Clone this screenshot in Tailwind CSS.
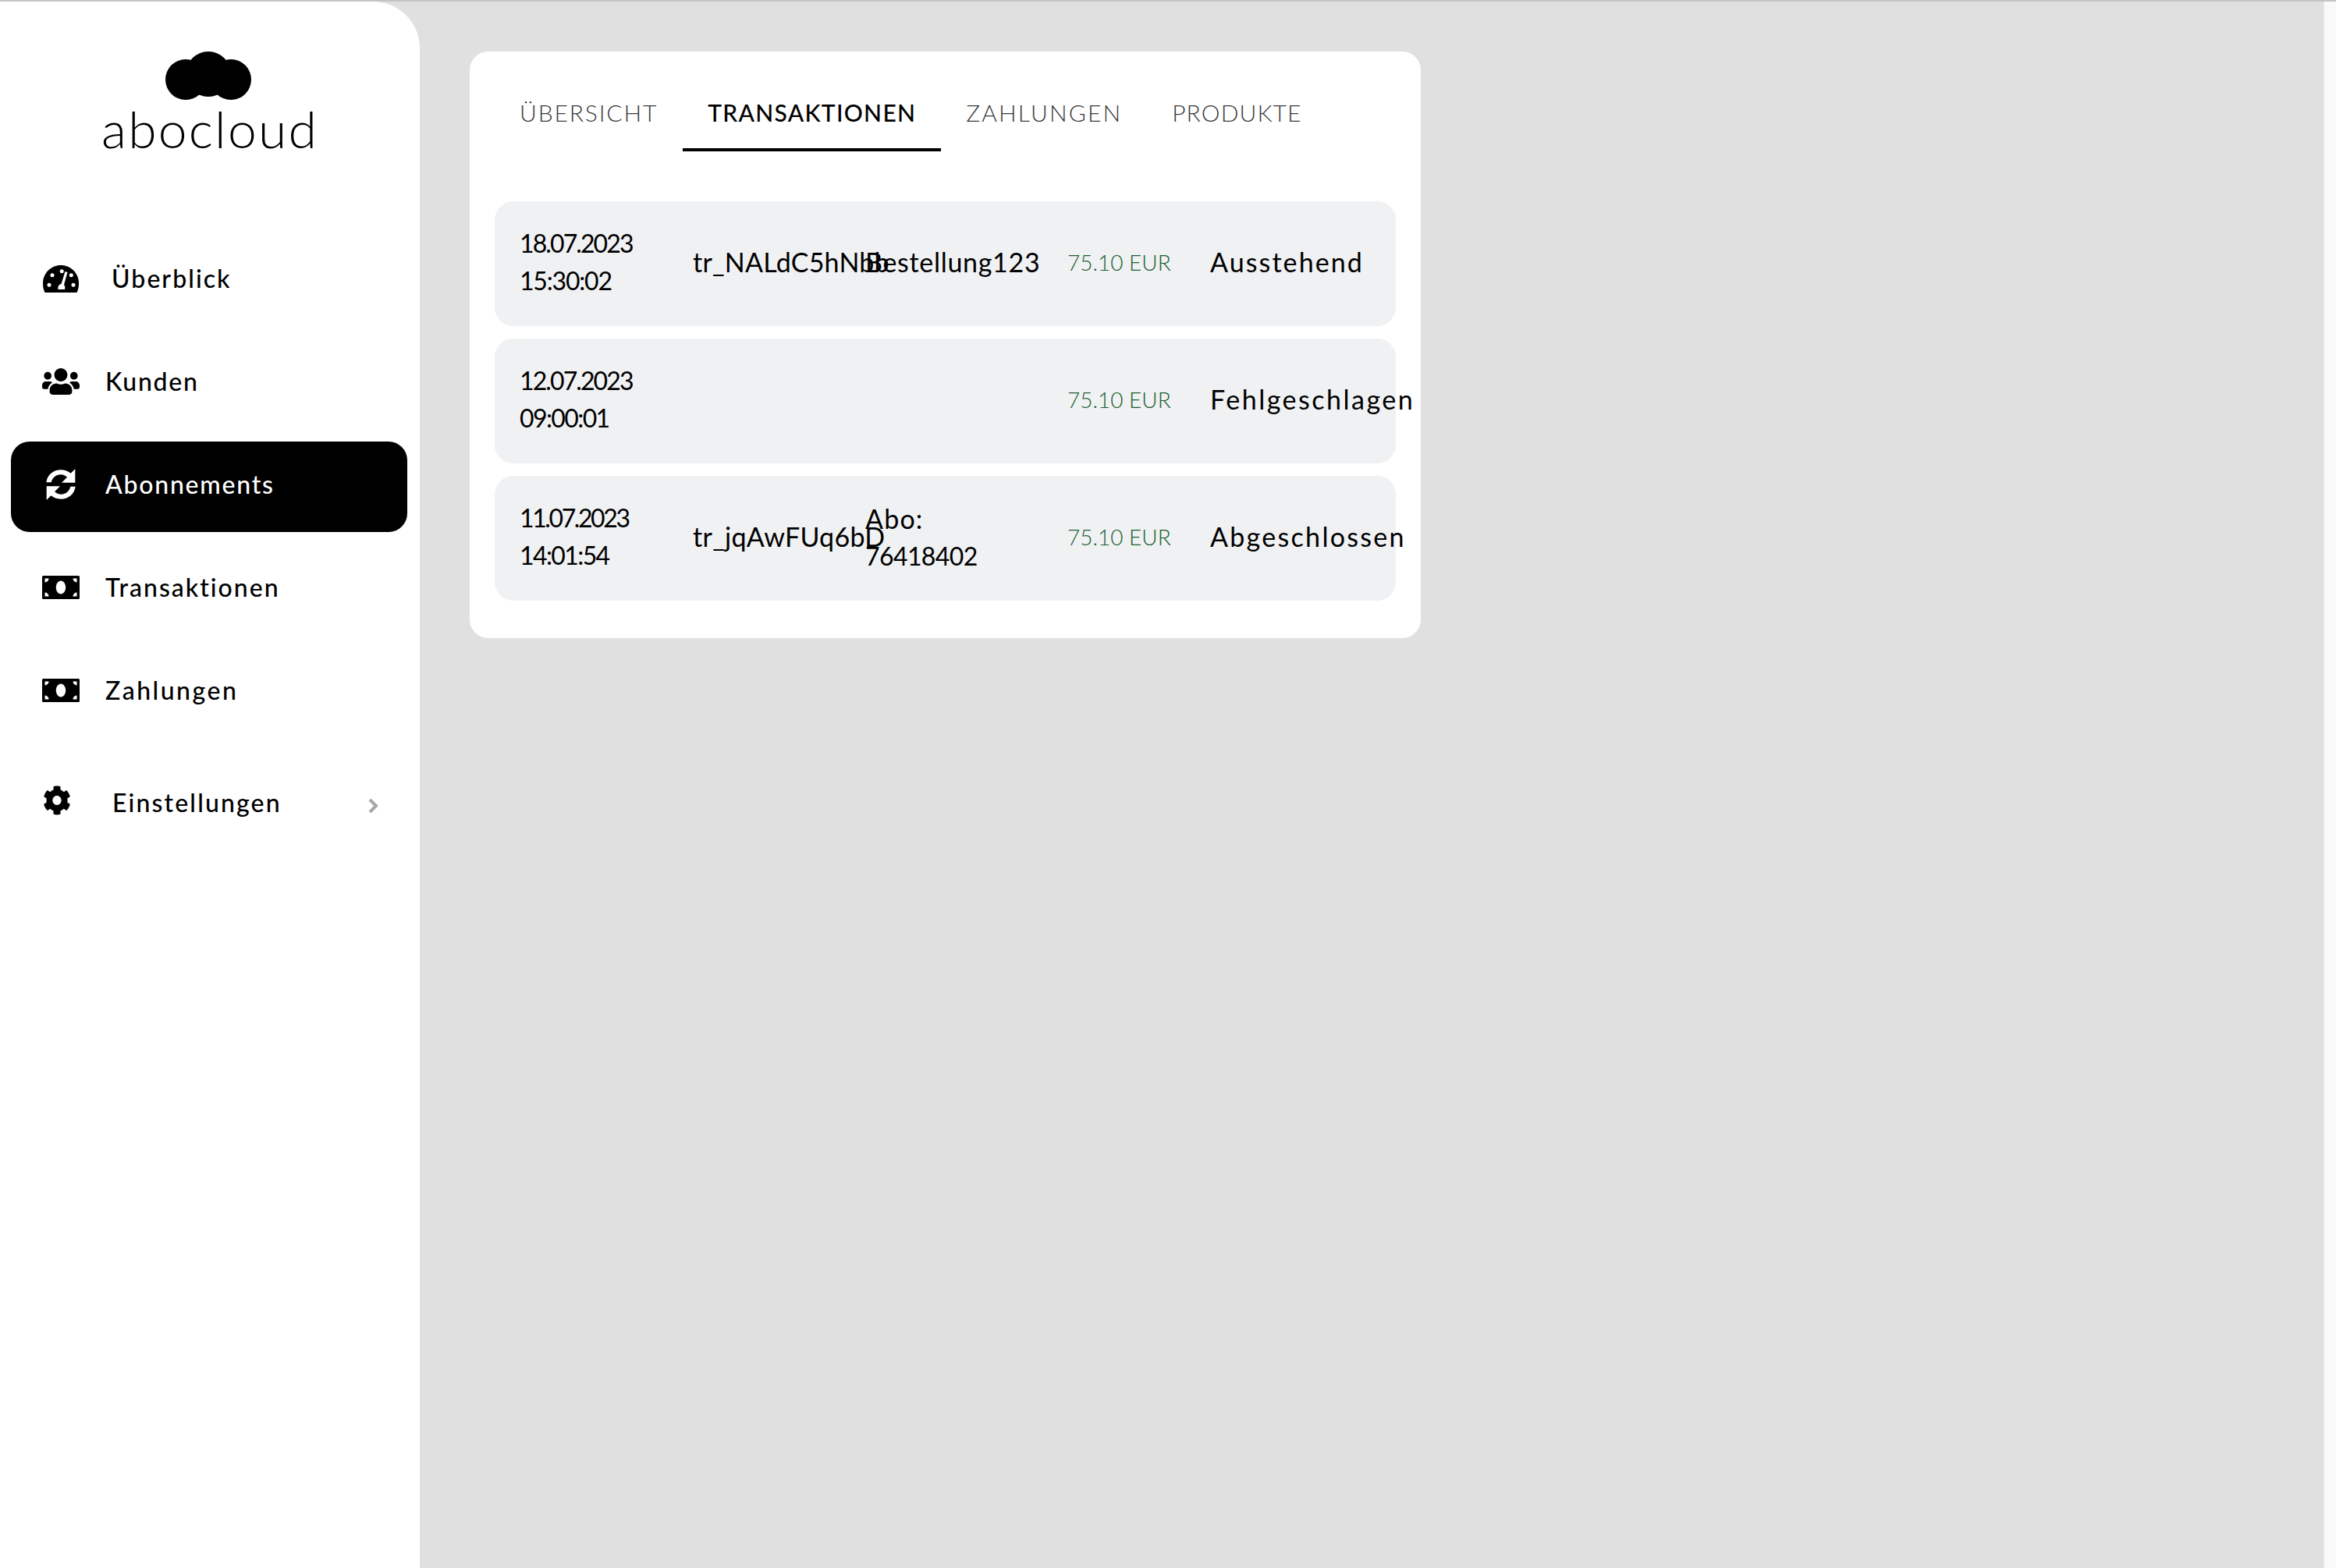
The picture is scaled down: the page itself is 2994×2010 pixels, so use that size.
<!DOCTYPE html>
<html lang="de">
<head>
<meta charset="utf-8">
<title>abocloud</title>
<script src="https://cdn.jsdelivr.net/npm/@tailwindcss/browser@4"></script>
</head>
<body class="m-0 bg-[#e0e0e0] font-['Lato',sans-serif] text-black">
<div class="flex h-[2010px] w-[2994px] flex-col overflow-hidden">
  <div class="h-[2px] w-full shrink-0 bg-[#c4c4c4]"></div>
  <div class="flex min-h-0 flex-1">
    <aside class="relative w-[538px] shrink-0 rounded-tr-[60px] bg-white">
      <div class="flex h-[300px] flex-col items-center pt-[64px]">
        <svg class="mr-[5px] h-[62px] w-[112px]" viewBox="0 0 112 62" fill="#000"><circle cx="27" cy="36" r="26"/><circle cx="56" cy="29" r="29"/><circle cx="85" cy="36" r="26"/></svg>
        <div class="mt-[2px] text-[66px] leading-[70px] font-light tracking-[2.2px]">abocloud</div>
      </div>
      <nav class="flex flex-col gap-[16px] pr-[16px] pl-[14px] text-[32px] font-medium">
        <a class="flex h-[116px] items-center pb-[6px]">
          <span class="flex w-[129px] pl-[41px]"><svg class="h-[35px] w-[46px]" viewBox="0 0 46 35"><path fill="#000" d="M2.500 35C.8 31.500 0 27.500 0 23 0 10.300 10.300 0 23 0s23 10.300 23 23c0 4.500-.8 8.500-2.500 12z"/><g fill="#fff"><circle cx="12" cy="12.700" r="2.500"/><circle cx="24.200" cy="7.700" r="2.500"/><circle cx="8" cy="25.300" r="2.500"/><circle cx="39" cy="25.300" r="2.500"/><circle cx="36.300" cy="12.700" r="2.500"/><path d="M28.500 8l3 1-4.500 16c1.500 1.500 1.500 4 1 6h-8.500c-.5-4 1-6.500 4-7z"/></g></svg></span>
          <span class="tracking-[2.05px]">Überblick</span>
        </a>
        <a class="flex h-[116px] items-center pb-[6px]">
          <span class="flex w-[121px] pl-[40px]"><svg class="h-[34px] w-[48px]" viewBox="0 32 640 448" preserveAspectRatio="none" fill="#000"><path d="M96 224c35.300 0 64-28.700 64-64s-28.700-64-64-64-64 28.700-64 64 28.700 64 64 64zm448 0c35.300 0 64-28.700 64-64s-28.700-64-64-64-64 28.700-64 64 28.700 64 64 64zm32 32h-64c-17.600 0-33.500 7.100-45.100 18.600 40.300 22.100 68.900 62 75.100 109.400h66c17.700 0 32-14.300 32-32v-32c0-35.300-28.700-64-64-64zm-256 0c61.900 0 112-50.100 112-112S381.900 32 320 32 208 82.100 208 144s50.100 112 112 112zm76.800 32h-8.300c-20.800 10-43.900 16-68.500 16s-47.600-6-68.500-16h-8.300C179.600 288 128 339.600 128 403.200V432c0 26.500 21.500 48 48 48h288c26.500 0 48-21.500 48-48v-28.800c0-63.600-51.600-115.200-115.200-115.200zm-223.700-13.400C161.500 263.100 145.600 256 128 256H64c-35.300 0-64 28.700-64 64v32c0 17.700 14.300 32 32 32h65.900c6.300-47.400 34.900-87.300 75.200-109.400z"/></svg></span>
          <span class="tracking-[1.75px]">Kunden</span>
        </a>
        <a class="flex h-[116px] items-center rounded-[24px] bg-black pb-[6px] text-white">
          <span class="flex w-[121px] pl-[44px]"><svg class="h-[40px] w-[40px]" viewBox="0 0 120 120" fill="#fff"><path d="M4 52C8 22 32 4 60 4c15 0 28 5 38 13L115 0v53H63l21-21c-7-6-15-10-24-10-18 0-33 12-37 30z"/><path d="M116 68c-4 30-28 48-56 48-15 0-28-5-38-13L5 120V67h52L36 88c7 6 15 10 24 10 18 0 33-12 37-30z"/></svg></span>
          <span class="tracking-[1.77px]">Abonnements</span>
        </a>
        <a class="flex h-[116px] items-center pb-[6px]">
          <span class="flex w-[121px] pl-[40px]"><svg class="h-[30px] w-[48px]" viewBox="0 0 48 30" fill="#000"><path fill-rule="evenodd" d="M1.500 0h45A1.500 1.500 0 0 1 48 1.500v27a1.500 1.500 0 0 1-1.500 1.500h-45A1.500 1.500 0 0 1 0 28.500v-27A1.500 1.500 0 0 1 1.500 0zM24 6.500c-3.400 0-6.200 3.800-6.200 8.500s2.800 8.500 6.200 8.500 6.200-3.800 6.200-8.500-2.800-8.500-6.200-8.500zM3.500 3.500v5a5 5 0 0 0 5-5zm36 0a5 5 0 0 0 5 5v-5zm-36 18v5h5a5 5 0 0 0-5-5zm41 0a5 5 0 0 0-5 5h5z"/></svg></span>
          <span class="tracking-[2px]">Transaktionen</span>
        </a>
        <a class="flex h-[116px] items-center pb-[6px]">
          <span class="flex w-[121px] pl-[40px]"><svg class="h-[30px] w-[48px]" viewBox="0 0 48 30" fill="#000"><path fill-rule="evenodd" d="M1.500 0h45A1.500 1.500 0 0 1 48 1.500v27a1.500 1.500 0 0 1-1.500 1.500h-45A1.500 1.500 0 0 1 0 28.500v-27A1.500 1.500 0 0 1 1.500 0zM24 6.500c-3.400 0-6.200 3.800-6.200 8.500s2.800 8.500 6.200 8.500 6.200-3.800 6.200-8.500-2.800-8.500-6.200-8.500zM3.500 3.500v5a5 5 0 0 0 5-5zm36 0a5 5 0 0 0 5 5v-5zm-36 18v5h5a5 5 0 0 0-5-5zm41 0a5 5 0 0 0-5 5h5z"/></svg></span>
          <span class="tracking-[2.5px]">Zahlungen</span>
        </a>
        <a class="mt-[12px] flex h-[116px] items-center pb-[6px]">
          <span class="flex w-[130px] pl-[41px]"><svg class="mb-[6px] h-[38px] w-[36px]" viewBox="0 0 512 512" fill="#000" preserveAspectRatio="none"><path d="M487.400 315.700l-42.600-24.600c4.300-23.200 4.300-47 0-70.200l42.600-24.600c4.900-2.800 7.100-8.600 5.500-14-11.100-35.600-30-67.800-54.700-94.600-3.800-4.100-10-5.100-14.800-2.300L380.800 110c-17.900-15.400-38.500-27.300-60.800-35.100V25.800c0-5.600-3.900-10.500-9.400-11.700-36.700-8.200-74.300-7.800-109.200 0-5.500 1.200-9.400 6.100-9.400 11.700V75c-22.200 7.900-42.800 19.800-60.800 35.100L88.700 85.500c-4.900-2.800-11-1.900-14.800 2.300-24.700 26.700-43.600 58.900-54.700 94.600-1.700 5.400.6 11.200 5.500 14L67.300 221c-4.300 23.200-4.300 47 0 70.200l-42.600 24.600c-4.900 2.800-7.100 8.600-5.500 14 11.100 35.600 30 67.800 54.700 94.600 3.800 4.100 10 5.100 14.800 2.300l42.600-24.600c17.900 15.400 38.500 27.300 60.800 35.100v49.200c0 5.600 3.900 10.500 9.400 11.700 36.700 8.200 74.300 7.800 109.200 0 5.500-1.200 9.400-6.100 9.400-11.700v-49.200c22.200-7.900 42.800-19.800 60.800-35.100l42.600 24.600c4.900 2.800 11 1.900 14.800-2.300 24.700-26.700 43.600-58.900 54.700-94.600 1.500-5.500-.7-11.300-5.600-14.100zM256 336c-44.100 0-80-35.900-80-80s35.900-80 80-80 80 35.900 80 80-35.900 80-80 80z"/></svg></span>
          <span class="tracking-[2.15px]">Einstellungen</span>
          <svg class="absolute left-[471px] mt-[8px] h-[20px] w-[14px]" viewBox="0 0 14 20" fill="none" stroke="#a8a8a8" stroke-width="4"><path d="M3 2l8 8-8 8"/></svg>
        </a>
      </nav>
    </aside>
    <main class="min-w-0 flex-1 pt-[64px] pl-[64px]">
      <section class="w-[1219px] rounded-[24px] bg-white px-[32px] pt-[32px] pb-[48px]">
        <div class="flex text-[30px] leading-[36px] text-[#3a3a3a]">
          <div class="flex h-[96px] items-center px-[32px] pb-[5px] font-light tracking-[1.85px]">ÜBERSICHT</div>
          <div class="flex h-[96px] items-center border-b-[4px] border-black px-[32px] pb-[1px] font-medium tracking-[1.3px] text-black">TRANSAKTIONEN</div>
          <div class="flex h-[96px] items-center px-[32px] pb-[5px] font-light tracking-[2.1px]">ZAHLUNGEN</div>
          <div class="flex h-[96px] items-center px-[32px] pb-[5px] font-light tracking-[1.1px]">PRODUKTE</div>
        </div>
        <div class="mt-[64px] flex flex-col gap-[16px]">
          <div class="flex h-[160px] items-center rounded-[24px] bg-[#f0f1f3] pb-[4px] pl-[32px] text-[32px] leading-[48px]">
            <div class="w-[222px] shrink-0 tracking-[-1.9px]">18.07.2023<br><span class="tracking-[-1.2px]">15:30:02</span></div>
            <div class="w-[221px] shrink-0 text-[34px] whitespace-nowrap tracking-[0.2px]">tr_NALdC5hNbb</div>
            <div class="w-[259px] shrink-0 text-[34px] whitespace-nowrap tracking-[0.7px]">Bestellung123</div>
            <div class="w-[183px] shrink-0 text-[28px] font-light text-[#1a6030]">75.10 EUR</div>
            <div class="shrink-0 text-[34px] whitespace-nowrap tracking-[2.1px]">Ausstehend</div>
          </div>
          <div class="flex h-[160px] items-center rounded-[24px] bg-[#f0f1f3] pb-[4px] pl-[32px] text-[32px] leading-[48px]">
            <div class="w-[222px] shrink-0 tracking-[-1.9px]">12.07.2023<br><span class="tracking-[-1.6px]">09:00:01</span></div>
            <div class="w-[221px] shrink-0"></div>
            <div class="w-[259px] shrink-0"></div>
            <div class="w-[183px] shrink-0 text-[28px] font-light text-[#1a6030]">75.10 EUR</div>
            <div class="shrink-0 text-[34px] whitespace-nowrap tracking-[2.5px]">Fehlgeschlagen</div>
          </div>
          <div class="flex h-[160px] items-center rounded-[24px] bg-[#f0f1f3] pb-[4px] pl-[32px] text-[32px] leading-[48px]">
            <div class="w-[222px] shrink-0 tracking-[-2.4px]">11.07.2023<br><span class="tracking-[-1.6px]">14:01:54</span></div>
            <div class="w-[221px] shrink-0 text-[34px] whitespace-nowrap tracking-[0.3px]">tr_jqAwFUq6bD</div>
            <div class="w-[259px] shrink-0 leading-[47px]"><span class="text-[34px] tracking-[1.2px]">Abo:</span><br><span class="tracking-[-0.6px]">76418402</span></div>
            <div class="w-[183px] shrink-0 text-[28px] font-light text-[#1a6030]">75.10 EUR</div>
            <div class="shrink-0 text-[34px] whitespace-nowrap tracking-[2.3px]">Abgeschlossen</div>
          </div>
        </div>
      </section>
    </main>
    <div class="w-[16px] shrink-0 border-l border-[#ececec] bg-[#f9f9f9]"></div>
  </div>
</div>
</body>
</html>
